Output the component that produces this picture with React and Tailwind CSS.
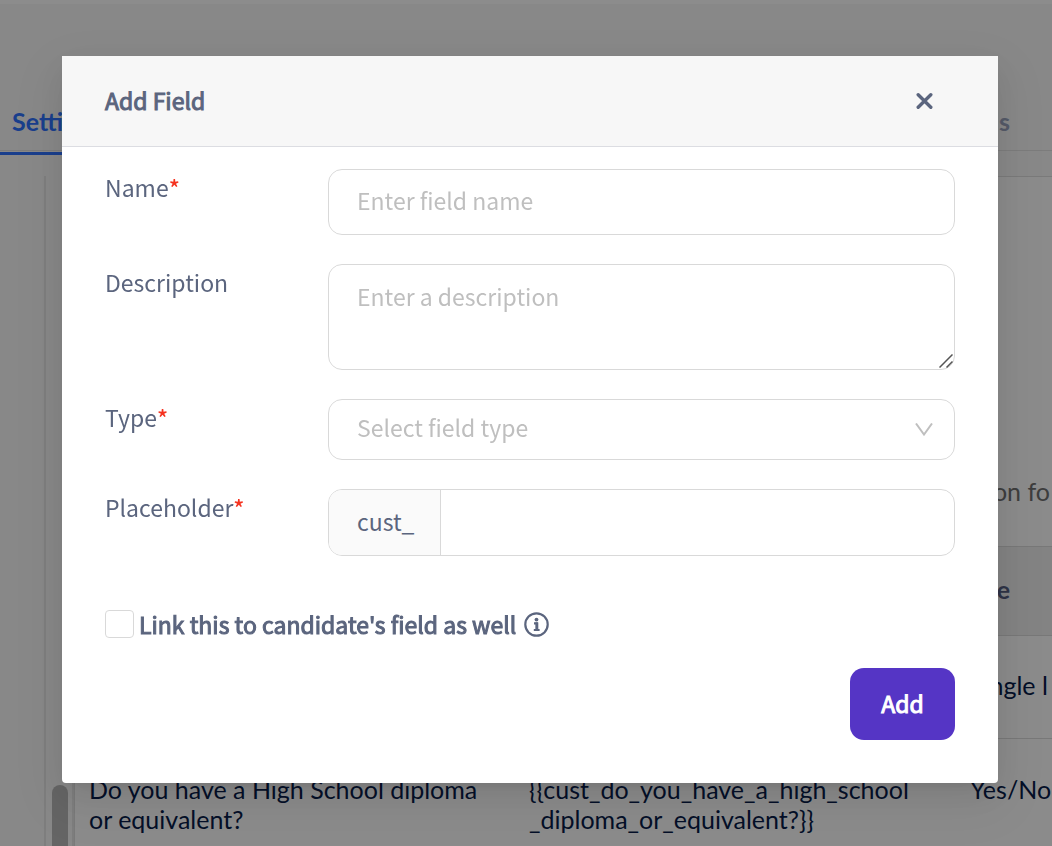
import React, { useState } from 'react';

const inputClass = 'w-full rounded-[14px] border border-[#d9d9d9] bg-white px-7 text-[23px] text-[#5b657e] outline-none placeholder:text-[#bfbfbf] placeholder:opacity-100';

const Label = ({ htmlFor, required, children }) => (
  <label htmlFor={htmlFor} className="text-[23px] leading-9">
    {children}
    {required && <span className="font-medium text-[#f5321f]">*</span>}
  </label>
);

const SettingsPage = () => (
  <div className="flex h-screen flex-col overflow-hidden border-t-4 border-white bg-[#f7f7f7] font-['Lato',sans-serif] text-[25px] leading-[30px] text-[#071b49]">
    <nav className="flex items-end justify-between border-b border-[#e2e2e2] pt-[102px] pr-[42px]">
      <a href="#settings" className="-mb-[5px] border-b-3 border-[#2f72ff] pb-4 pl-3 font-bold text-[#2f72ff]">Settings</a>
      <a href="#fields" className="pb-3.5 font-bold text-[#9aa3bd]">Fields</a>
    </nav>

    <div className="mt-[25px] flex min-h-0 flex-1">
      <div className="w-11 shrink-0"></div>
      <div className="flex w-[30px] shrink-0 items-end justify-end border-x-2 border-[#e6e6e6] bg-[#f7f7f7] pr-1">
        <div className="h-[61px] w-4 rounded-t-full bg-[#b8b8b8]"></div>
      </div>
      <div className="min-w-0 flex-1 border-t border-l border-[#dedede] bg-[#fdfdfd]">
        <p className="pt-[299px] pr-0.5 pb-10 text-right whitespace-nowrap text-[#6f6f6f]">Information fo</p>
        <table className="w-full table-fixed text-left">
          <colgroup>
            <col className="w-[440px]" />
            <col className="w-[441px]" />
            <col />
          </colgroup>
          <thead>
            <tr className="h-[89px] border-y border-[#dadada] bg-[#eeeeee] text-[#545d80]">
              <th className="pb-1 pl-3.5">Name</th>
              <th className="pb-1 pl-3.5">Placeholder</th>
              <th className="pr-[42px] pb-1 text-right">Type</th>
            </tr>
          </thead>
          <tbody>
            <tr className="h-[103px] border-b border-[#dadada]">
              <td className="pb-1 pl-3.5">Job title</td>
              <td className="pb-1 pl-3.5">{'{{cust_job_title}}'}</td>
              <td className="pb-1 pl-3.5 whitespace-nowrap">Single l</td>
            </tr>
            <tr className="align-top">
              <td className="pt-[35px] pl-3.5">Do you have a High School diploma<br />or equivalent?</td>
              <td className="pt-[35px] pl-3.5">{'{{cust_do_you_have_a_high_school'}<br />{'_diploma_or_equivalent?}}'}</td>
              <td className="pt-[35px] pl-3.5 whitespace-nowrap">Yes/No</td>
            </tr>
          </tbody>
        </table>
      </div>
    </div>
  </div>
);

const AddFieldDialog = () => {
  const [name, setName] = useState('');
  const [description, setDescription] = useState('');
  const [type, setType] = useState('');
  const [placeholder, setPlaceholder] = useState('');
  const [linked, setLinked] = useState(false);

  return (
    <div role="dialog" aria-labelledby="dialog-title" className="rounded-b bg-white text-[#5b657e] shadow-[0_6px_12px_-8px_rgba(0,0,0,0.12),0_12px_32px_0_rgba(0,0,0,0.08),0_18px_56px_16px_rgba(0,0,0,0.05)]">
      <header className="flex h-[91px] items-center justify-between border-b border-[#dcdde2] bg-[#f7f7f7] pr-[65px] pl-[43px]">
        <h1 id="dialog-title" className="pb-0.5 text-[23px] [-webkit-text-stroke:1px]">Add Field</h1>
        <button type="button" aria-label="Close">
          <svg className="h-4 w-[17px]" viewBox="0 0 17 16" fill="none" stroke="currentColor" strokeWidth="3.4" strokeLinecap="round">
            <path d="M2.2 1.8 14.8 14.2M14.8 1.8 2.2 14.2" />
          </svg>
        </button>
      </header>

      <form className="px-[43px] pt-[22px] pb-[43px]" onSubmit={e => e.preventDefault()}>
        <div className="grid grid-cols-[223px_1fr] items-start gap-y-[29px]">
          <Label htmlFor="name" required>Name</Label>
          <input id="name" type="text" className={`${inputClass} h-[66px] pb-1`} placeholder="Enter field name" value={name} onChange={e => setName(e.target.value)} />

          <Label htmlFor="description">Description</Label>
          <div className="relative">
            <textarea id="description" className={`${inputClass} block h-[106px] resize-none py-[15px] leading-8`} placeholder="Enter a description" value={description} onChange={e => setDescription(e.target.value)} />
            <svg className="pointer-events-none absolute right-0.5 bottom-0.5 h-[14px] w-[14px]" viewBox="0 0 14 14" fill="none" stroke="#555" strokeWidth="1.5">
              <path d="M0.5 13.5 13.5 0.5M7.5 13.5 13.5 7.5" />
            </svg>
          </div>

          <Label htmlFor="type" required>Type</Label>
          <div className="relative">
            <select id="type" className={`${inputClass} h-[61px] appearance-none pb-1 ${type ? '' : 'text-[#bfbfbf]'}`} value={type} onChange={e => setType(e.target.value)}>
              <option value="" disabled>Select field type</option>
              <option value="single">Single line</option>
              <option value="boolean">Yes/No</option>
            </select>
            <svg className="pointer-events-none absolute top-6 right-[22px] h-[13px] w-[18px]" viewBox="0 0 18 13" fill="none" stroke="#bfbfbf" strokeWidth="2">
              <path d="M1 0.5 9 11.5 17 0.5" />
            </svg>
          </div>

          <Label htmlFor="placeholder" required>Placeholder</Label>
          <div className="flex h-[67px] overflow-hidden rounded-[14px] border border-[#d9d9d9]">
            <span className="flex w-28 items-center border-r border-[#d9d9d9] bg-[#fafafa] pb-0.5 pl-7 text-[23px]">cust_</span>
            <input id="placeholder" type="text" className="min-w-0 flex-1 px-7 text-[23px] outline-none" value={placeholder} onChange={e => setPlaceholder(e.target.value)} />
          </div>
        </div>

        <div className="mt-[50px] flex items-center">
          <input id="linked" type="checkbox" className="h-7 w-[29px] appearance-none rounded border border-[#d9d9d9] bg-white checked:bg-[#5535c5]" checked={linked} onChange={e => setLinked(e.target.checked)} />
          <label htmlFor="linked" className="pl-[5px] text-[23px] leading-9 [-webkit-text-stroke:1px]">Link this to candidate's field as well</label>
          <svg className="ml-2 h-[25px] w-[25px]" viewBox="0 0 25 25" fill="none" stroke="currentColor">
            <circle cx="12.5" cy="12.5" r="11.2" strokeWidth="2.2" />
            <circle cx="12.5" cy="7.6" r="1.9" fill="currentColor" stroke="none" />
            <path d="M10 11.4h2.8v6" strokeWidth="2.2" />
            <path d="M12.9 10.4v8" strokeWidth="2.8" />
            <path d="M9.8 18h5.8" strokeWidth="2" />
          </svg>
        </div>

        <div className="mt-[26px] flex justify-end">
          <button type="submit" className="h-[72px] w-[105px] rounded-[14px] bg-[#5535c5] pb-0.5 text-[23px] text-white [-webkit-text-stroke:1px]">Add</button>
        </div>
      </form>
    </div>
  );
};

const App = () => (
  <div className="min-h-screen">
    <SettingsPage />
    <div className="fixed inset-0 overflow-hidden bg-black/45 pt-14 pr-[54px] pl-[62px] font-['Noto_Sans_CJK_SC',sans-serif]">
      <AddFieldDialog />
    </div>
  </div>
);

export default App;
